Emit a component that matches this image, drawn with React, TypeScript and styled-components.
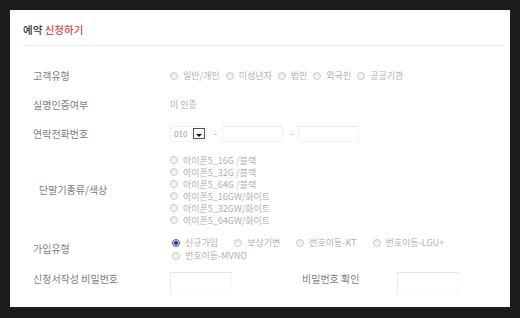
import React from 'react'
import styled, { createGlobalStyle } from 'styled-components'

const GlobalStyle = createGlobalStyle`
  html, body {
    margin: 0;
    padding: 0;
    background: #1c1c1c;
  }
  body {
    font-family: "Noto Sans CJK KR", "Noto Sans", sans-serif;
  }
`

const customerTypes = ['일반/개인', '미성년자', '법인', '외국인', '공공기관']
const devices = [
  '아이폰5_16G /블랙',
  '아이폰5_32G /블랙',
  '아이폰5_64G /블랙',
  '아이폰5_16GW/화이트',
  '아이폰5_32GW/화이트',
  '아이폰5_64GW/화이트',
]
const joinTypes = ['신규가입', '보상기변', '번호이동-KT', '번호이동-LGU+']

export default function App() {
  return (
    <>
      <GlobalStyle />
      <Panel>
        <Header>
          <Title>
            예약 <Accent>신청하기</Accent>
          </Title>
        </Header>
        <Form>
          <Row $height={29}>
            <Label>고객유형</Label>
            <Inline>
              {customerTypes.map((t) => (
                <Option key={t} $gap={6}>
                  <Radio />
                  {t}
                </Option>
              ))}
            </Inline>
          </Row>
          <Row $height={29}>
            <Label>실명인증여부</Label>
            <Value>미 인증</Value>
          </Row>
          <Row $height={29}>
            <Label>연락전화번호</Label>
            <Inline>
              <Select>
                <SelectText>010</SelectText>
                <SelectButton>
                  <Arrow />
                </SelectButton>
              </Select>
              <Dash>-</Dash>
              <TextInput />
              <Dash>-</Dash>
              <TextInput />
            </Inline>
          </Row>
          <Row $height={84}>
            <Label $indent={6}>단말기종류/색상</Label>
            <List>
              {devices.map((d) => (
                <ListItem key={d}>
                  <Radio />
                  {d}
                </ListItem>
              ))}
            </List>
          </Row>
          <Row $height={34}>
            <Label>가입유형</Label>
            <JoinList>
              {joinTypes.map((t, i) => (
                <Option key={t} $gap={16}>
                  <Radio $checked={i === 0} />
                  {t}
                </Option>
              ))}
              <Option $gap={16}>
                <Radio />
                번호이동-MVNO
              </Option>
            </JoinList>
          </Row>
          <PasswordRow>
            <Label $line={14}>신청서작성 비밀번호</Label>
            <PasswordInput />
            <Label $line={14}>비밀번호 확인</Label>
            <PasswordInput />
          </PasswordRow>
        </Form>
      </Panel>
    </>
  )
}

const Panel = styled.div`
  margin: 10px;
  width: 500px;
  height: 297px;
  background: #fff;
  overflow: hidden;
`

const Header = styled.div`
  box-sizing: border-box;
  height: 36px;
  padding-top: 14px;
  margin: 0 5px 0 13px;
  border-bottom: 1px solid #efefef;
`

const Title = styled.div`
  font-size: 10.5px;
  line-height: 12px;
  font-weight: 500;
  color: #333;
`

const Accent = styled.span`
  color: #e2483a;
`

const Form = styled.div`
  display: flex;
  flex-direction: column;
  padding: 15px 0 0 23px;
`

const Row = styled.div<{ $height: number }>`
  display: grid;
  grid-template-columns: 137px 1fr;
  align-items: center;
  height: ${(p) => p.$height}px;
`

const Label = styled.div<{ $indent?: number; $line?: number }>`
  font-size: 10px;
  line-height: ${(p) => p.$line ?? 12}px;
  color: #7d7d7d;
  padding-left: ${(p) => p.$indent ?? 0}px;
  white-space: nowrap;
`

const Value = styled.div`
  font-size: 9px;
  color: #b0b0b0;
  line-height: 12px;
`

const Inline = styled.div`
  display: flex;
  align-items: center;
`

const Option = styled.label<{ $gap: number }>`
  display: inline-flex;
  align-items: center;
  margin-right: ${(p) => p.$gap}px;
  font-size: 9px;
  line-height: 13px;
  color: #b0b0b0;
  white-space: nowrap;
`

const Radio = styled.span<{ $checked?: boolean }>`
  box-sizing: border-box;
  width: 8px;
  height: 8px;
  margin-right: 5px;
  border-radius: 50%;
  border: 1px solid ${(p) => (p.$checked ? '#4a5a80' : '#c8c8c8')};
  background: ${(p) =>
    p.$checked
      ? 'radial-gradient(circle, #1d3f9c 0 1.6px, #cfd9ee 2px)'
      : 'linear-gradient(#eaeaea, #fbfbfb)'};
  flex: none;
`

const List = styled.div`
  display: flex;
  flex-direction: column;
`

const ListItem = styled.div`
  display: flex;
  align-items: center;
  height: 12px;
  font-size: 9px;
  color: #b0b0b0;
  white-space: nowrap;
`

const JoinList = styled.div`
  display: flex;
  flex-wrap: wrap;
  padding-left: 2px;
`

const Select = styled.div`
  box-sizing: border-box;
  display: flex;
  align-items: center;
  justify-content: space-between;
  width: 37px;
  height: 16px;
  padding: 0 1px 0 3px;
  border: 1px solid #f0f0f0;
`

const SelectText = styled.span`
  font-size: 8px;
  color: #999;
`

const SelectButton = styled.span`
  box-sizing: border-box;
  display: flex;
  align-items: center;
  justify-content: center;
  width: 12px;
  height: 11px;
  border: 1px solid #555;
  background: #fafafa;
`

const Arrow = styled.span`
  width: 0;
  height: 0;
  margin-top: 3px;
  border-left: 3px solid transparent;
  border-right: 3px solid transparent;
  border-top: 3px solid #111;
`

const Dash = styled.span`
  font-size: 9px;
  color: #999;
  margin: 0 5px 0 7px;
`

const TextInput = styled.div`
  box-sizing: border-box;
  width: 61px;
  height: 16px;
  border: 1px solid #f3f3f3;
  border-top-color: #e6e6e6;
`

const PasswordRow = styled.div`
  display: grid;
  grid-template-columns: 137px 62px 70px 95px 62px;
  align-items: start;
  padding-top: 6px;

  & > div:nth-child(3) {
    grid-column: 4;
  }
  & > div:nth-child(4) {
    grid-column: 5;
  }
`

const PasswordInput = styled.div`
  box-sizing: border-box;
  height: 22px;
  border: 1px solid #f7f7f7;
  border-top-color: #e4e4e4;
  border-left-color: #e8e8e8;
`
